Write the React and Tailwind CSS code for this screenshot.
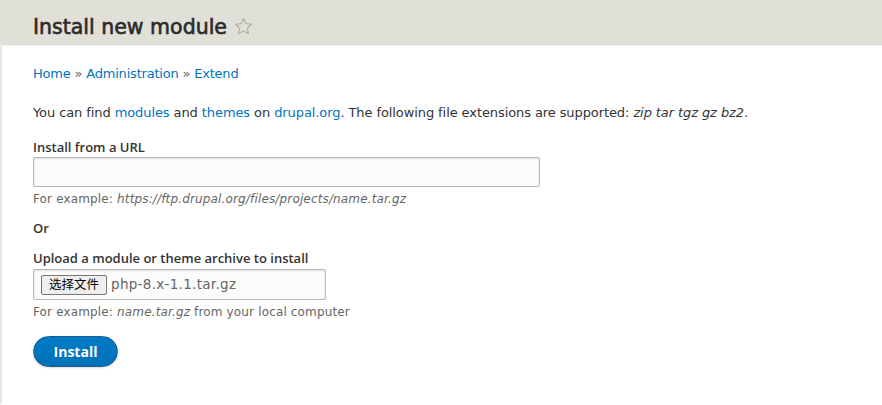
import { useState } from 'react'

export default function App() {
    const [fileName] = useState('php-8.x-1.1.tar.gz')

    return (
        <div className="min-h-[405px] bg-white text-[#333] text-[13px]" style={{ fontFamily: '"DejaVu Sans", "Noto Sans CJK SC", sans-serif' }}>
            {/* page title bar */}
            <div className="h-[46px] bg-[#e0e0d8] flex items-center pl-[33px] pt-[9px] border-b border-[#f0f0ea]">
                <h1 className="text-[20.5px] font-normal text-[#2a2a2a] leading-none" style={{ WebkitTextStroke: '0.6px #2a2a2a' }}>Install new module</h1>
                <svg viewBox="0 0 24 24" className="w-[21px] h-[21px] ml-[6px] mt-[-2px]" fill="none" stroke="#b0aea4" strokeWidth="1.3" strokeLinejoin="round">
                    <path d="M12 2.8l2.75 5.9 6.45.75-4.8 4.4 1.3 6.4L12 17l-5.7 3.25 1.3-6.4-4.8-4.4 6.45-.75z" />
                </svg>
            </div>

            <div className="border-l-2 border-[#e6e6e2] min-h-[358px] pl-[31px] pt-[18px]">
                <nav className="text-[#0074bd] leading-5 tracking-[-0.2px]">
                    <a href="#">Home</a>
                    <span className="text-[#666]"> » </span>
                    <a href="#">Administration</a>
                    <span className="text-[#666]"> » </span>
                    <a href="#">Extend</a>
                </nav>

                <p className="mt-[19px] leading-5 tracking-[-0.09px]">
                    You can find <a href="#" className="text-[#0074bd]">modules</a> and{' '}
                    <a href="#" className="text-[#0074bd]">themes</a> on{' '}
                    <a href="#" className="text-[#0074bd]">drupal.org</a>. The following file extensions are supported:{' '}
                    <em>zip tar tgz gz bz2</em>.
                </p>

                <label className="block mt-[14px] font-semibold text-[13px] leading-5" style={{ fontFamily: '"Open Sans", sans-serif' }}>Install from a URL</label>
                <input
                    type="text"
                    className="block mt-0 w-[507px] h-[30px] bg-[#fcfcfa] border border-[#b8b8b8] rounded-[2px] shadow-[inset_0_1px_2px_rgba(0,0,0,0.12)] px-2 outline-none"
                />
                <div className="mt-[4px] text-[12px] text-[#666] leading-4 tracking-[0.15px]">
                    For example: <em>https://ftp.drupal.org/files/projects/name.tar.gz</em>
                </div>

                <div className="mt-[11px] font-semibold leading-5" style={{ fontFamily: '"Open Sans", sans-serif' }}>Or</div>

                <label className="block mt-[10px] font-semibold leading-5" style={{ fontFamily: '"Open Sans", sans-serif' }}>Upload a module or theme archive to install</label>
                <div className="mt-[1px] w-[293px] h-[31px] bg-[#fcfcfa] border border-[#b8b8b8] rounded-[2px] shadow-[inset_0_1px_2px_rgba(0,0,0,0.12)] flex items-center pl-[7px]">
                    <button className="h-[20px] px-[7px] bg-[#efefef] border border-[#767676] rounded-[2px] text-[12.5px] text-black leading-none" style={{ fontFamily: '"Noto Sans CJK SC", sans-serif' }}>
                        选择文件
                    </button>
                    <span className="ml-[4px] text-[13.5px] text-[#666] tracking-[0.3px]">{fileName}</span>
                </div>
                <div className="mt-[4px] text-[12px] text-[#666] leading-4 tracking-[0.15px]">
                    For example: <em>name.tar.gz</em> from your local computer
                </div>

                <button className="mt-[16px] w-[85px] h-[31px] rounded-full bg-gradient-to-b from-[#007bc6] to-[#0071b8] border border-[#1e5c90] text-white font-bold text-[14px] shadow-[0_1px_2px_rgba(0,0,0,0.15)]" style={{ fontFamily: '"Open Sans", sans-serif' }}>
                    Install
                </button>
            </div>
        </div>
    )
}
